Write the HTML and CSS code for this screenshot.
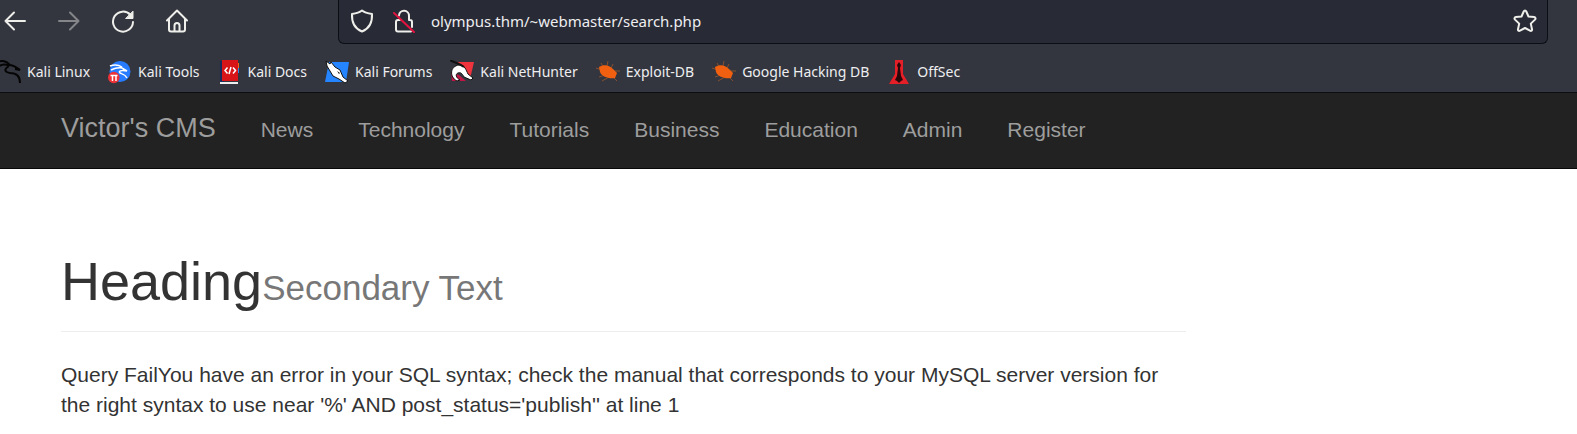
FILE: index.html
```html
<!DOCTYPE html>
<html lang="en">
<head>
<meta charset="utf-8">
<title>Victor's CMS</title>
<link rel="stylesheet" href="styles.css">
</head>
<body>
<header class="browser">
  <div class="toolbar">
    <div class="controls">
      <button class="tool" aria-label="Back"><svg class="icon" viewBox="0 0 24 24"><path d="M22 12H2.500M11 3.500L2.500 12l8.500 8.500"/></svg></button>
      <button class="tool dim" aria-label="Forward" disabled><svg class="icon" viewBox="0 0 24 24"><path d="M2 12h19.500M13 3.500l8.500 8.500-8.500 8.500"/></svg></button>
      <button class="tool" aria-label="Reload"><svg class="icon" viewBox="0 0 24 24"><path d="M19.500 6A10 10 0 1 0 22 13"/><path class="solid" d="M22 2.500V9.500h-7z"/></svg></button>
      <button class="tool" aria-label="Home"><svg class="icon" viewBox="0 0 24 24"><path d="M2 11.500L12 1.500l10 10M4 10v10.500a2 2 0 0 0 2 2h12a2 2 0 0 0 2-2V10M9.500 22v-5.500a2.500 2.500 0 0 1 5 0V22"/></svg></button>
    </div>
    <div class="address">
      <button class="tool" aria-label="Tracking protection"><svg class="icon" viewBox="0 0 24 24"><path d="M12 1.500C9 4 5.500 4.500 2 5c-.4 8 2.500 14.500 10 17.500C19.500 19.500 22.400 13 22 5c-3.500-.5-7-1-10-3.500z"/></svg></button>
      <button class="tool" aria-label="Connection not secure"><svg class="icon" viewBox="0 0 24 24"><path d="M7 6.500a5 5 0 0 1 10 .5v4h1a2 2 0 0 1 2 2v5M8 11H6a2 2 0 0 0-2 2v7.500a2 2 0 0 0 2 2h13"/><path class="slash" d="M2 4l20 19"/></svg></button>
      <input class="url" type="text" aria-label="Address" value="olympus.thm/~webmaster/search.php">
      <button class="tool" aria-label="Bookmark this page"><svg class="icon" viewBox="0 0 24 24"><path d="M12 1.500c.7 0 1 .4 1.300 1l2.200 5 5.600.6c1.400.2 1.900 1.500.9 2.500l-4.200 4 1.200 5.600c.3 1.400-.8 2.200-2 1.500L12 19l-5 2.700c-1.200.7-2.300-.1-2-1.500l1.200-5.600-4.200-4c-1-1-.5-2.300.9-2.500l5.600-.6 2.200-5c.3-.6.600-1 1.300-1z"/></svg></button>
    </div>
  </div>
  <nav class="bookmarks" aria-label="Bookmarks">
    <a class="bookmark" href="#"><svg class="favicon" viewBox="0 0 24 24"><path class="ink" d="M0 2c6-2 9-1 13 3M2 6c4-2 7-2 10 0M12 5c5 0 7 2 11 5l-5-1M12 6c-5 3-5 6 1 7 6 0 10 3 10 10"/></svg>Kali Linux</a>
    <a class="bookmark" href="#"><svg class="favicon" viewBox="0 0 24 24"><circle cx="12" cy="11.500" r="10.500" fill="#277bff"/><path class="line" d="M2 6c5-2 9-1 12 1M3 10c4-2 7-3 11-2l5 3c-6-1-9 0-7 2 2 1 5 1 7 5"/><circle cx="5.800" cy="17.500" r="5.800" fill="#ed3237"/><path class="line" d="M2.500 15.500h7M4.500 15.500V21M8 15.500V21"/></svg>Kali Tools</a>
    <a class="bookmark" href="#"><svg class="favicon" viewBox="0 0 24 24"><path fill="#172c5b" d="M2 1h4v21H2z"/><path fill="#d71519" d="M4 0h16v21H4z"/><path fill="#eee" d="M2 22h18v2H2z"/><path fill="#2784e8" d="M20 8h1v5h-1z"/><path fill="#e76c1e" d="M20 3h1v5h-1z"/><path class="line" d="M9.500 7.500L7 10.500l2.500 3M15 7.500l2.500 3-2.500 3M13 7l-2 7"/></svg>Kali Docs</a>
    <a class="bookmark" href="#"><svg class="favicon" viewBox="0 0 24 24"><path fill="#2584ff" d="M4 2h20l-3 20H0z"/><path fill="#fff" stroke="#111" d="M1 1l4 3 1-2 4 5 5 3 3 7 5 4-3 2-6-4-6-3-3-5-3-5z"/><path fill="#111" d="M12 11l3 2-1 1z"/></svg>Kali Forums</a>
    <a class="bookmark" href="#"><svg class="favicon" viewBox="0 0 24 24"><path fill="#f0343d" d="M8 2h16l-4 17-6-6z"/><path fill="#c01545" d="M1 12l8 3 7 6H2z"/><path fill="#fff" stroke="#111" d="M7 21C-1 17 0 6 9 5c6 0 7 5 9 9l5 4-2 2-7-3c-2-4-4-5-6-4-3 1-2 5 2 7z"/><path fill="none" stroke="#111" stroke-width="2" d="M0 0c5 3 9 3 14 7"/></svg>Kali NetHunter</a>
    <a class="bookmark" href="#"><svg class="favicon" viewBox="0 0 24 24"><path class="legs" d="M7 7L5 3M11 6l1-5M0 8l6 2M3 17l6-2M6 21l7-4M15 8l2-4M18 11h6M17 17l4 4"/><path fill="#f06010" d="M3 7c5-3 10-2 14 2l4 4-2 5c-6 1-13-1-15-6z"/></svg>Exploit-DB</a>
    <a class="bookmark" href="#"><svg class="favicon" viewBox="0 0 24 24"><path class="legs" d="M7 7L5 3M11 6l1-5M0 8l6 2M3 17l6-2M6 21l7-4M15 8l2-4M18 11h6M17 17l4 4"/><path fill="#f06010" d="M3 7c5-3 10-2 14 2l4 4-2 5c-6 1-13-1-15-6z"/></svg>Google Hacking DB</a>
    <a class="bookmark" href="#"><svg class="favicon" viewBox="0 0 24 24"><path fill="#e51f27" d="M8 0h8v14l6 10H2l6-10z"/><path fill="#26070a" d="M12 2l2 3-1 3 1 8 2 4-2 1-2 2-2-2-2-1 2-4 1-8-1-3z"/></svg>OffSec</a>
  </nav>
</header>
<nav class="navbar" aria-label="Main">
  <a class="brand" href="#">Victor's CMS</a>
  <a class="navlink" href="#">News</a>
  <a class="navlink" href="#">Technology</a>
  <a class="navlink" href="#">Tutorials</a>
  <a class="navlink" href="#">Business</a>
  <a class="navlink" href="#">Education</a>
  <a class="navlink" href="#">Admin</a>
  <a class="navlink" href="#">Register</a>
</nav>
<main class="content">
  <h1 class="heading">Heading<small class="secondary">Secondary Text</small></h1>
  <p class="message">Query FailYou have an error in your SQL syntax; check the manual that corresponds to your MySQL server version for the right syntax to use near '%' AND post_status='publish'' at line 1</p>
</main>
</body>
</html>
```
FILE: styles.css
```css
* { box-sizing: border-box; }

body {
  margin: 0;
  background: #fff;
  color: #333;
  font-family: "Liberation Sans", Arial, sans-serif;
  font-size: 21px;
  line-height: 30px;
}

a { text-decoration: none; }

.browser {
  background: #33363f;
  border-bottom: 1px solid #0c0e14;
  color: #eeeef0;
  font-family: "Noto Sans", sans-serif;
  overflow: hidden;
}

.toolbar {
  display: flex;
  gap: 149px;
  height: 44px;
  padding: 0 29px 0 3px;
}

.controls {
  display: flex;
  align-items: center;
  gap: 30px;
  padding-bottom: 2px;
}

.tool {
  display: flex;
  flex: none;
  padding: 0;
  border: 0;
  background: none;
  color: #eeeeea;
}

.dim { color: #85868a; }

.icon {
  width: 24px;
  height: 24px;
  fill: none;
  stroke: currentColor;
  stroke-width: 2;
  stroke-linecap: round;
  stroke-linejoin: round;
}

.solid { fill: currentColor; stroke-width: 1; }
.slash { stroke: #e2143f; }

.address {
  display: flex;
  flex: 1;
  align-items: center;
  gap: 18px;
  min-width: 0;
  padding: 0 10px 2px 11px;
  border: 1px solid #0c0e14;
  border-top: 0;
  border-radius: 0 0 6px 6px;
  background: #282a36;
}

.url {
  flex: 1;
  min-width: 0;
  margin-left: -3px;
  padding: 0;
  border: 0;
  outline: 0;
  background: none;
  color: #eeeef0;
  font-family: inherit;
  font-size: 15px;
  line-height: 24px;
}

.bookmarks {
  display: flex;
  align-items: center;
  gap: 18px;
  height: 48px;
  margin-left: -3px;
  padding-top: 7px;
}

.bookmark {
  display: flex;
  align-items: center;
  gap: 6px;
  color: #eeeef0;
  font-size: 14px;
  line-height: 24px;
  white-space: nowrap;
}

.favicon {
  flex: none;
  width: 24px;
  height: 24px;
}

.ink { fill: none; stroke: #050505; stroke-width: 2; }
.line { fill: none; stroke: #fff; stroke-width: 1.5; }
.legs { fill: none; stroke: #84502f; stroke-width: 1; }

.navbar {
  display: flex;
  align-items: baseline;
  gap: 45px;
  min-height: 76px;
  padding: 20px 61px;
  border-bottom: 1px solid #080808;
  background: #222;
}

.brand,
.navlink { color: #9d9d9d; }

.brand { font-size: 27px; }

.content {
  max-width: 1247px;
  padding: 80px 61px 0;
}

.heading {
  margin: 0 0 28px;
  padding-bottom: 18px;
  border-bottom: 1px solid #eee;
  font-size: 54px;
  font-weight: 400;
  line-height: 64px;
}

.secondary {
  color: #777;
  font-size: 35px;
  line-height: 35px;
}

.message { margin: 0; }
```
